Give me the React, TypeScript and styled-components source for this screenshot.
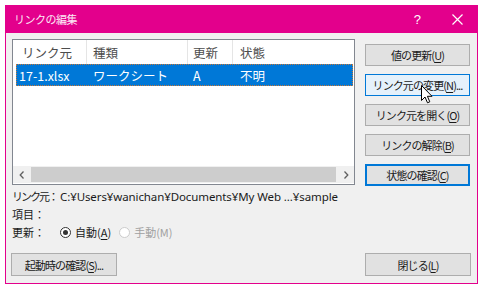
import React from "react";
import styled, { createGlobalStyle, css } from "styled-components";

const GlobalStyle = createGlobalStyle`
  html, body {
    margin: 0;
    padding: 0;
    background: #ffffff;
  }
  body {
    font-family: "Noto Sans CJK JP", "Noto Sans", sans-serif;
    font-size: 11px;
    color: #1a1a1a;
  }
`;

const Page = styled.div`
  padding: 5px 3px 2px 5px;
`;

const Dialog = styled.div`
  width: 473px;
  height: 279px;
  box-sizing: border-box;
  border: 1px solid #e3008c;
  background: #f0f0f0;
  display: flex;
  flex-direction: column;
`;

const TitleBar = styled.div`
  height: 27px;
  flex: 0 0 auto;
  background: #e3008c;
  color: #fff;
  display: flex;
  align-items: center;
  padding-left: 8px;
  font-size: 11px;
  letter-spacing: -0.5px;
`;

const Title = styled.div`
  flex: 1;
  margin-top: -1px;
  opacity: 0.92;
`;

const TitleButton = styled.div`
  width: 40px;
  height: 27px;
  display: flex;
  align-items: center;
  justify-content: center;
  font-family: "Liberation Sans", sans-serif;
  font-size: 13px;
  color: #fff;
`;

const Body = styled.div`
  flex: 1;
  display: flex;
  flex-direction: column;
  padding: 6px 6px 7px 6px;
`;

const Top = styled.div`
  display: flex;
  gap: 10px;
`;

const LeftCol = styled.div`
  width: 343px;
  display: flex;
  flex-direction: column;
`;

const RightCol = styled.div`
  width: 105px;
  display: flex;
  flex-direction: column;
  gap: 8px;
  padding-top: 5px;
`;

const ListBox = styled.div`
  height: 146px;
  box-sizing: border-box;
  border: 1px solid #828790;
  background: #fff;
  display: flex;
  flex-direction: column;
`;

const HeaderRow = styled.div`
  display: flex;
  height: 24px;
  flex: 0 0 auto;
`;

const HeaderCell = styled.div<{ $w?: number; $pad?: number }>`
  ${(p) => (p.$w ? `width: ${p.$w}px;` : "flex: 1;")}
  box-sizing: border-box;
  padding-left: ${(p) => p.$pad ?? 6}px;
  border-right: 1px solid #e5e5e5;
  display: flex;
  align-items: center;
  color: #4d4d4d;
  font-size: 12.5px;
  &:last-child {
    border-right: none;
  }
`;

const DataRow = styled.div`
  display: flex;
  height: 22px;
  margin: 0 1px 0 3px;
  box-sizing: border-box;
  background: #0078d7;
  outline: 1px dotted #c87838;
  outline-offset: -1px;
  color: #fff;
`;

const DataCell = styled.div<{ $w?: number; $pad?: number }>`
  ${(p) => (p.$w ? `width: ${p.$w}px;` : "flex: 1;")}
  box-sizing: border-box;
  padding-left: ${(p) => p.$pad ?? 6}px;
  display: flex;
  align-items: center;
  font-size: 12.5px;
  white-space: nowrap;
`;

const Spacer = styled.div`
  flex: 1;
`;

const ScrollBar = styled.div`
  height: 17px;
  flex: 0 0 auto;
  margin-bottom: 1px;
  background: #f0f0f0;
  display: flex;
  align-items: center;
`;

const ScrollArrow = styled.div`
  width: 17px;
  height: 17px;
  display: flex;
  align-items: center;
  justify-content: center;
`;

const ScrollThumb = styled.div`
  flex: 1;
  height: 15px;
  margin: 0 1px;
  background: #cdcdcd;
`;

const InfoArea = styled.div`
  margin-top: 2px;
  display: flex;
  flex-direction: column;
`;

const InfoLine = styled.div`
  height: 18px;
  display: flex;
  align-items: center;
  white-space: nowrap;
`;

const InfoLabel = styled.span<{ $tight?: boolean }>`
  letter-spacing: ${(p) => (p.$tight ? "-2px" : "0")};
`;

const Colon = styled.span`
  width: 11px;
  text-align: center;
`;

const PathText = styled.span`
  margin-left: 1px;
  font-family: "Noto Sans", sans-serif;
  font-size: 11.5px;
  letter-spacing: -0.1px;
`;

const RadioRow = styled.div`
  margin-left: 15px;
  display: flex;
  align-items: center;
`;

const RadioGroup = styled.label<{ $disabled?: boolean }>`
  display: flex;
  align-items: center;
  gap: 4px;
  margin-right: 8px;
  color: ${(p) => (p.$disabled ? "#a0a0a0" : "#1a1a1a")};
`;

const RadioCircle = styled.span<{ $checked?: boolean; $disabled?: boolean }>`
  width: 11px;
  height: 11px;
  box-sizing: border-box;
  border-radius: 50%;
  border: 1px solid ${(p) => (p.$disabled ? "#cccccc" : "#333333")};
  background: #fff;
  display: flex;
  align-items: center;
  justify-content: center;
  &::after {
    content: "";
    width: 5px;
    height: 5px;
    border-radius: 50%;
    background: ${(p) => (p.$checked ? "#333333" : "transparent")};
  }
`;

const Footer = styled.div`
  margin-top: auto;
  margin-left: -1px;
  display: flex;
  justify-content: space-between;
  align-items: flex-end;
`;

type Variant = "normal" | "hover" | "default";

const Button = styled.div<{ $variant?: Variant; $w?: number; $h?: number }>`
  position: relative;
  width: ${(p) => p.$w ?? 105}px;
  height: ${(p) => p.$h ?? 22}px;
  box-sizing: border-box;
  border: 1px solid #adadad;
  background: #e1e1e1;
  display: flex;
  align-items: center;
  justify-content: center;
  font-size: 11px;
  letter-spacing: -0.9px;
  color: #1a1a1a;
  white-space: nowrap;
  ${(p) =>
    p.$variant === "hover" &&
    css`
      background: #e5f1fb;
      border-color: #0078d7;
    `}
  ${(p) =>
    p.$variant === "default" &&
    css`
      border-color: #0078d7;
      box-shadow: inset 0 0 0 1px #0078d7;
    `}
`;

const U = styled.span`
  text-decoration: underline;
  text-underline-offset: 2px;
`;

const Cursor = styled.svg`
  position: absolute;
  left: 55px;
  top: 10px;
  width: 12px;
  height: 19px;
`;

export default function App() {
  return (
    <>
      <GlobalStyle />
      <Page>
        <Dialog>
          <TitleBar>
            <Title>リンクの編集</Title>
            <TitleButton>?</TitleButton>
            <TitleButton>
              <svg width="11" height="11" viewBox="0 0 11 11">
                <path d="M0.5 0.5 L10.5 10.5 M10.5 0.5 L0.5 10.5" stroke="#fff" strokeWidth="1.2" />
              </svg>
            </TitleButton>
          </TitleBar>
          <Body>
            <Top>
              <LeftCol>
                <ListBox>
                  <HeaderRow>
                    <HeaderCell $w={74} $pad={9}>リンク元</HeaderCell>
                    <HeaderCell $w={101}>種類</HeaderCell>
                    <HeaderCell $w={45} $pad={5}>更新</HeaderCell>
                    <HeaderCell $pad={7}>状態</HeaderCell>
                  </HeaderRow>
                  <DataRow>
                    <DataCell $w={71} $pad={3}>17-1.xlsx</DataCell>
                    <DataCell $w={101}>ワークシート</DataCell>
                    <DataCell $w={45} $pad={5}>A</DataCell>
                    <DataCell $pad={7}>不明</DataCell>
                  </DataRow>
                  <Spacer />
                  <ScrollBar>
                    <ScrollArrow>
                      <svg width="6" height="8" viewBox="0 0 6 8">
                        <path d="M4.5 0.5 L1.2 4 L4.5 7.5" fill="none" stroke="#606060" strokeWidth="1.3" />
                      </svg>
                    </ScrollArrow>
                    <ScrollThumb />
                    <ScrollArrow>
                      <svg width="6" height="8" viewBox="0 0 6 8">
                        <path d="M1.5 0.5 L4.8 4 L1.5 7.5" fill="none" stroke="#606060" strokeWidth="1.3" />
                      </svg>
                    </ScrollArrow>
                  </ScrollBar>
                </ListBox>
                <InfoArea>
                  <InfoLine>
                    <InfoLabel $tight>リンク元</InfoLabel>
                    <Colon>：</Colon>
                    <PathText>C:¥Users¥wanichan¥Documents¥My Web ...¥sample</PathText>
                  </InfoLine>
                  <InfoLine>
                    <InfoLabel>項目</InfoLabel>
                    <Colon>：</Colon>
                  </InfoLine>
                  <InfoLine>
                    <InfoLabel>更新</InfoLabel>
                    <Colon>：</Colon>
                    <RadioRow>
                      <RadioGroup>
                        <RadioCircle $checked />
                        <span>
                          自動(<U>A</U>)
                        </span>
                      </RadioGroup>
                      <RadioGroup $disabled>
                        <RadioCircle $disabled />
                        <span>手動(M)</span>
                      </RadioGroup>
                    </RadioRow>
                  </InfoLine>
                </InfoArea>
              </LeftCol>
              <RightCol>
                <Button>
                  値の更新(<U>U</U>)
                </Button>
                <Button $variant="hover">
                  リンク元の変更(<U>N</U>)...
                  <Cursor viewBox="0 0 12 19">
                    <path
                      d="M0.5 0.5 L0.5 15.5 L4 12 L6.5 17.8 L8.8 16.8 L6.4 11.3 L11 11.3 Z"
                      fill="#fff"
                      stroke="#000"
                      strokeWidth="1"
                      strokeLinejoin="round"
                    />
                  </Cursor>
                </Button>
                <Button>
                  リンク元を開く(<U>O</U>)
                </Button>
                <Button>
                  リンクの解除(<U>B</U>)
                </Button>
                <Button $variant="default">
                  状態の確認(<U>C</U>)
                </Button>
              </RightCol>
            </Top>
            <Footer>
              <Button $w={106} $h={23}>
                起動時の確認(<U>S</U>)...
              </Button>
              <Button $w={106} $h={23}>
                閉じる(<U>L</U>)
              </Button>
            </Footer>
          </Body>
        </Dialog>
      </Page>
    </>
  );
}
